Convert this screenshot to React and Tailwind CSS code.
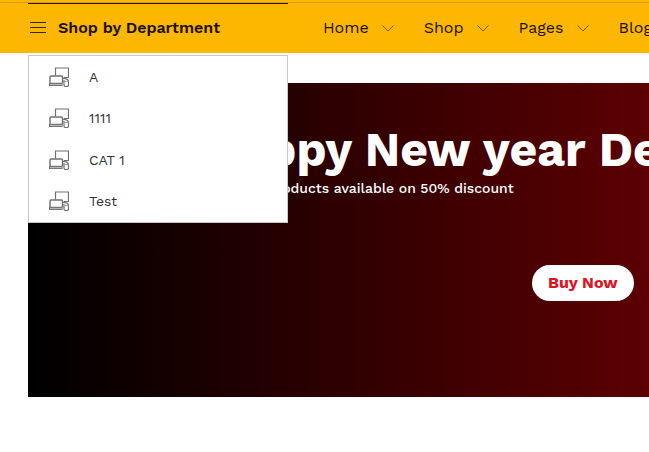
const departments = ["A", "1111", "CAT 1", "Test"];
const navItems = [
  { label: "Home", menu: true },
  { label: "Shop", menu: true },
  { label: "Pages", menu: true },
  { label: "Blog", menu: false },
];

function MenuIcon() {
  return (
    <svg className="h-3 w-4 shrink-0" viewBox="0 0 16 12" stroke="#3b2300" strokeWidth="1" aria-hidden="true">
      <path d="M0 .5H16M0 5.5H16M0 10.5H16" />
    </svg>
  );
}

function ChevronIcon() {
  return (
    <svg className="h-3 w-3 shrink-0" viewBox="0 0 12 12" fill="none" stroke="#7a5200" strokeWidth="1" aria-hidden="true">
      <path d="M.5 3.5L6 9L11.5 3.5" />
    </svg>
  );
}

function DevicesIcon() {
  return (
    <svg className="size-5 shrink-0" viewBox="0 0 20 20" fill="none" stroke="#707070" strokeWidth="1.2" aria-hidden="true">
      <path d="M6.5 8.5V1H19.5V10.5H15" />
      <rect x="1" y="9" width="12.5" height="7.5" rx="1" strokeWidth="1.4" />
      <path d="M.5 16V18.5H13.5" />
      <path d="M1 17.5H14" stroke="#b5b5b5" />
      <path d="M13.5 11.5Q18 11 19.5 14V18Q19.5 19.5 18 19.5H16.5Q15 19.5 15 18V13" />
      <path d="M15 14.5H19.5" stroke="#a5a5a5" />
    </svg>
  );
}

export default function App() {
  return (
    <div className="overflow-x-hidden bg-white font-['Work_Sans','Inter',sans-serif] text-[#1c1100]">
      <header className="bg-[#fdb700] pt-[2px]">
        <div className="flex h-[51px] border-t border-[#d99b08] pl-7">
          <div className="relative z-10 w-[260px] shrink-0">
            <button type="button" className="flex h-12 w-full items-center gap-3 border-t border-[#2a1700] pl-[2px] text-left text-base font-semibold">
              <MenuIcon />
              Shop by Department
            </button>
            <ul className="absolute inset-x-0 top-[52px] flex h-[168px] flex-col border border-[#c8c8c8] bg-white">
              {departments.map((name) => (
                <li key={name} className="flex-1">
                  <a href="#" className="flex h-full items-center gap-5 pl-5 text-sm/5 text-[#333]">
                    <DevicesIcon />
                    {name}
                  </a>
                </li>
              ))}
            </ul>
          </div>
          <nav className="flex min-w-0 flex-1 items-center gap-[30px] overflow-hidden whitespace-nowrap pl-[35px]">
            {navItems.map(({ label, menu }) => (
              <a key={label} href="#" className="flex shrink-0 items-center gap-[13px] text-base">
                {label}
                {menu && <ChevronIcon />}
              </a>
            ))}
          </nav>
        </div>
      </header>
      <main className="pt-[30px] pb-14 pl-7">
        <section className="flex h-[314px] flex-col items-start overflow-hidden whitespace-nowrap bg-[linear-gradient(to_right,#000000,#5c0002)] pt-10 pl-[175px] text-white">
          <h1 className="text-5xl/[54px] font-bold">Happy New year Deals</h1>
          <p className="text-sm/[22px] font-medium">Selected products available on 50% discount</p>
          <button type="button" className="mt-[66px] ml-[329px] h-9 rounded-full bg-white px-4 text-base font-bold text-[#dc1424]">
            Buy Now
          </button>
        </section>
      </main>
    </div>
  );
}
